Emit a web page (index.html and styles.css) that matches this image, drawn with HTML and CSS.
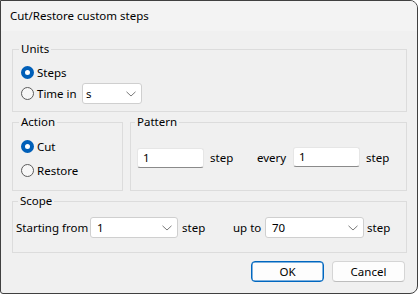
FILE: index.html
```html
<!DOCTYPE html>
<html>
<head>
  <title>Cut/Restore custom steps</title>
  <link rel="stylesheet" href="styles.css">
</head>
<body>
  <div class="window">
    <div class="titlebar">Cut/Restore custom steps</div>
    <div class="content">
      <fieldset class="group units">
        <legend>Units</legend>
        <label class="radio-row"><span class="radio checked"></span>Steps</label>
        <div class="radio-row tall">
          <span class="radio"></span><span class="time-label">Time in</span>
          <div class="combo combo-unit">
            <span>s</span>
            <svg class="chevron" width="10" height="6" viewBox="0 0 10 6"><path d="M0.5 0.8 L5 5 L9.5 0.8" fill="none" stroke="#6a6a6a" stroke-width="0.9"/></svg>
          </div>
        </div>
      </fieldset>

      <div class="split">
        <fieldset class="group action">
          <legend>Action</legend>
          <label class="radio-row"><span class="radio checked"></span>Cut</label>
          <label class="radio-row"><span class="radio"></span>Restore</label>
        </fieldset>
        <fieldset class="group pattern">
          <legend>Pattern</legend>
          <div class="field-row">
            <div class="textbox first">1</div>
            <span class="unit-step">step</span>
            <span class="every">every</span>
            <div class="textbox">1</div>
            <span class="unit-last">step</span>
          </div>
        </fieldset>
      </div>

      <fieldset class="group scope">
        <legend>Scope</legend>
        <div class="field-row center">
          <span class="from-label">Starting from</span>
          <div class="combo combo-from">
            <span>1</span>
            <svg class="chevron" width="10" height="6" viewBox="0 0 10 6"><path d="M0.5 0.8 L5 5 L9.5 0.8" fill="none" stroke="#6a6a6a" stroke-width="0.9"/></svg>
          </div>
          <span class="unit-from">step</span>
          <span class="upto-label">up to</span>
          <div class="combo combo-to">
            <span>70</span>
            <svg class="chevron" width="10" height="6" viewBox="0 0 10 6"><path d="M0.5 0.8 L5 5 L9.5 0.8" fill="none" stroke="#6a6a6a" stroke-width="0.9"/></svg>
          </div>
          <span class="unit-last">step</span>
        </div>
      </fieldset>

      <div class="buttons">
        <button class="primary">OK</button>
        <button>Cancel</button>
      </div>
    </div>
  </div>
</body>
</html>
```

FILE: styles.css
```css
* {
  box-sizing: border-box;
}
body {
  margin: 0;
  background: #ffffff;
  font-family: "Segoe UI", "Noto Sans", sans-serif;
  font-size: 11.5px;
  color: #000;
}
.window {
  width: 418px;
  height: 294px;
  border: 1px solid #404040;
  border-radius: 0 8px 8px 3px;
  background: #f0f0f0;
  overflow: hidden;
}
.titlebar {
  height: 30px;
  line-height: 30px;
  padding-left: 9px;
  background: #f3f3f3;
}
.content {
  padding: 0 10px 0 11px;
}
.group {
  margin: 0;
  min-width: 0;
  border: 1px solid #dcdcdc;
}
.group legend {
  padding: 0 2px;
  margin-left: -2px;
  line-height: 16px;
}
.units {
  margin-top: 10px;
  padding: 5px 8px 7px;
  display: flex;
  flex-direction: column;
  gap: 1px;
}
.radio-row {
  display: flex;
  align-items: center;
  height: 20px;
}
.radio-row.tall {
  height: 21px;
}
.radio {
  width: 13px;
  height: 13px;
  border-radius: 50%;
  border: 1px solid #5c5c5c;
  background: #f7f7f7;
  margin-right: 3px;
  flex: none;
}
.radio.checked {
  border: 4px solid #005fb8;
  background: #fff;
}
.time-label {
  width: 45px;
}
.combo {
  height: 21px;
  display: flex;
  align-items: center;
  justify-content: space-between;
  background: #fff;
  border: 1px solid #cfcfcf;
  border-radius: 3px;
  padding: 0 5px 0 6px;
}
.combo-unit {
  width: 60px;
  padding-left: 3px;
}
.combo-from {
  width: 88px;
}
.combo-to {
  width: 99px;
}
.chevron {
  flex: none;
}

.split {
  display: flex;
  gap: 7px;
  margin-top: 2px;
}
.action {
  width: 111px;
  padding: 6px 8px 10px;
  display: flex;
  flex-direction: column;
  gap: 4px;
}
.pattern {
  flex: 1;
  padding: 17px 6px 0;
}
.field-row {
  display: flex;
  align-items: flex-start;
}
.field-row.center {
  align-items: center;
}
.textbox {
  width: 67px;
  height: 20px;
  line-height: 18px;
  background: #fff;
  border: 1px solid #e6e6e6;
  border-bottom-color: #8a8a8a;
  border-radius: 3px;
  padding-left: 5px;
  flex: none;
}
.textbox.first {
  margin-top: 1px;
}
.field-row > span {
  line-height: 20px;
  margin-top: 1px;
  flex: none;
}
.unit-step {
  width: 53px;
  padding-left: 6px;
}
.every {
  width: 36px;
}
.unit-last {
  padding-left: 6px;
}

.scope {
  margin-top: 2px;
  padding: 8px 3px 14px;
}
.scope legend {
  margin-left: 2px;
}
.field-row.center > span {
  margin-top: 0;
}
.from-label {
  width: 74px;
}
.unit-from {
  width: 55px;
  padding-left: 4px;
}
.upto-label {
  width: 32px;
}
.scope .unit-last {
  padding-left: 3px;
}

.buttons {
  display: flex;
  justify-content: flex-end;
  gap: 8px;
  margin-top: 8px;
  margin-right: 2px;
}
.buttons button {
  width: 73px;
  height: 21px;
  font-family: inherit;
  font-size: 11.5px;
  color: #000;
  background: #fdfdfd;
  border: 1px solid #d5d5d5;
  border-bottom-color: #bdbdbd;
  border-radius: 4px;
  padding: 0;
}
.buttons button.primary {
  border: 1px solid #0067c0;
  box-shadow: inset 0 0 0 0.5px #0067c0;
}
```
